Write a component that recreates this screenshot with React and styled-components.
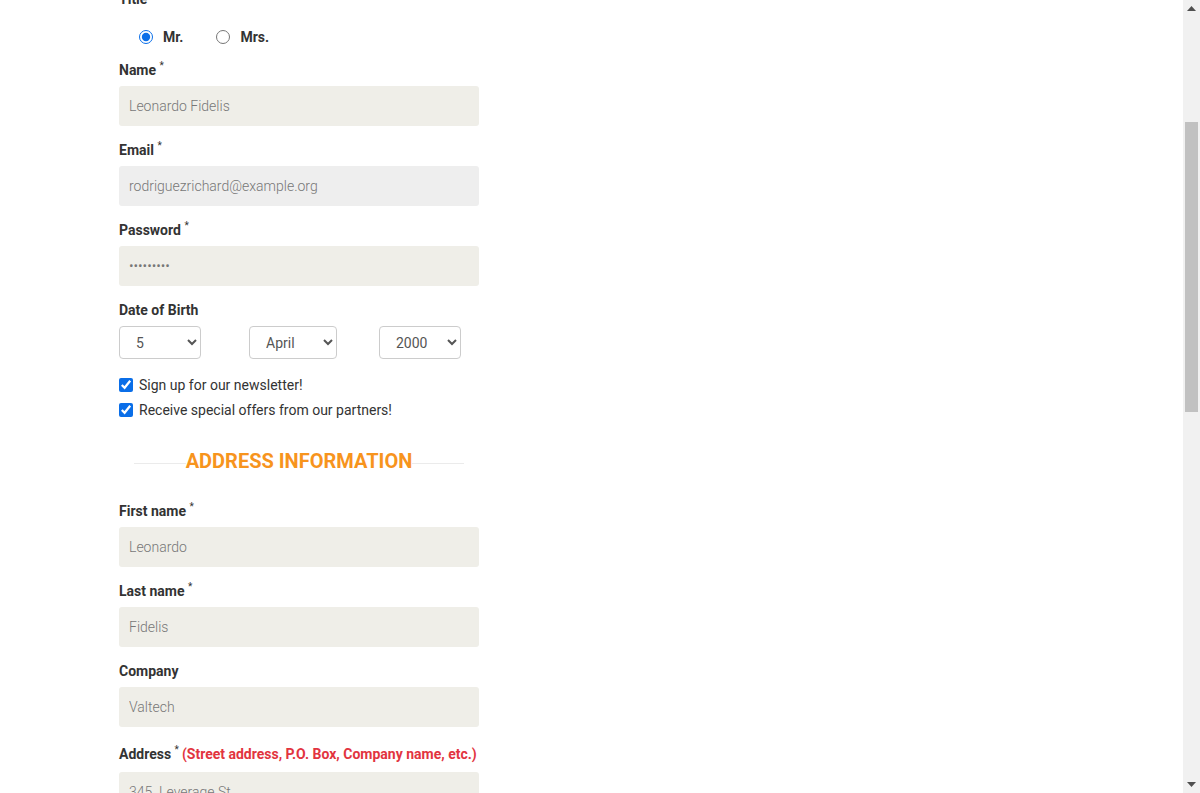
import React from "react";
import styled, { createGlobalStyle } from "styled-components";

const GlobalStyle = createGlobalStyle`
    html, body {
        margin: 0;
        padding: 0;
        background: #fff;
        overflow: hidden;
    }
    * {
        box-sizing: border-box;
    }
`

const App = () => {
    return (
        <Page>
            <GlobalStyle />
            <Main>
                <Form>
                    <Label>Title</Label>
                    <RadioRow>
                        <Option>
                            <input type="radio" name="title" defaultChecked />
                            Mr.
                        </Option>
                        <Option>
                            <input type="radio" name="title" />
                            Mrs.
                        </Option>
                    </RadioRow>

                    <Label>Name <Req>*</Req></Label>
                    <Input defaultValue="Leonardo Fidelis" />

                    <Label>Email <Req>*</Req></Label>
                    <Input grey defaultValue="rodriguezrichard@example.org" readOnly />

                    <Label>Password <Req>*</Req></Label>
                    <Input type="password" defaultValue="123456789" />

                    <Label>Date of Birth</Label>
                    <DateRow>
                        <Select w={82} defaultValue="5">
                            <option value="5">5</option>
                        </Select>
                        <Select w={88} defaultValue="April">
                            <option value="April">April</option>
                        </Select>
                        <Select w={82} defaultValue="2000">
                            <option value="2000">2000</option>
                        </Select>
                    </DateRow>

                    <CheckList>
                        <Check>
                            <input type="checkbox" defaultChecked />
                            Sign up for our newsletter!
                        </Check>
                        <Check>
                            <input type="checkbox" defaultChecked />
                            Receive special offers from our partners!
                        </Check>
                    </CheckList>

                    <Heading>ADDRESS INFORMATION</Heading>

                    <Label>First name <Req>*</Req></Label>
                    <Input defaultValue="Leonardo" />

                    <Label>Last name <Req>*</Req></Label>
                    <Input defaultValue="Fidelis" />

                    <Label>Company</Label>
                    <Input defaultValue="Valtech" />

                    <Label tall>
                        Address <Req>*</Req>
                        <Hint>(Street address, P.O. Box, Company name, etc.)</Hint>
                    </Label>
                    <Input defaultValue="345  Leverage St" />
                </Form>
            </Main>

            <Scrollbar>
                <Arrow>
                    <svg width="9" height="5" viewBox="0 0 9 5"><polygon points="0,5 4.5,0 9,5" fill="#505050" /></svg>
                </Arrow>
                <Track>
                    <Thumb />
                </Track>
                <Arrow>
                    <svg width="9" height="5" viewBox="0 0 9 5"><polygon points="0,0 4.5,5 9,0" fill="#505050" /></svg>
                </Arrow>
            </Scrollbar>
        </Page>
    )
}

const Page = styled.div`
    display: flex;
    width: 1200px;
    height: 793px;
    font-family: Roboto, "Liberation Sans", Arial, sans-serif;
    color: #333;
`

const Main = styled.div`
    flex: 1;
    height: 793px;
    overflow: hidden;
`

const Form = styled.div`
    width: 360px;
    margin: -11px 0 0 119px;
    display: flex;
    flex-direction: column;
`

const Label = styled.div`
    font-size: 14px;
    font-weight: 700;
    line-height: ${p => p.tall ? '26px' : '20px'};
    margin-bottom: ${p => p.tall ? '5px' : '6px'};
    color: #333;
    white-space: nowrap;
`

const Req = styled.sup`
    font-size: 10px;
    font-weight: 400;
    vertical-align: top;
    position: relative;
    top: -4px;
`

const Hint = styled.span`
    color: #e23440;
    margin-left: 3px;
`

const Input = styled.input`
    width: 360px;
    height: 40px;
    border: 0;
    border-radius: 3px;
    outline: 0;
    padding: 0 10px;
    margin-bottom: 14px;
    background-color: ${p => p.grey ? '#eeeeee' : '#efeee8'};
    color: #777;
    font-family: Roboto, "Liberation Sans", Arial, sans-serif;
    font-size: 14px;
    font-weight: 300;
`

const RadioRow = styled.div`
    display: flex;
    align-items: center;
    gap: 33px;
    height: 20px;
    margin: 12px 0 13px;
    padding-left: 20px;
`

const Option = styled.label`
    display: flex;
    align-items: center;
    gap: 10px;
    font-size: 14px;
    font-weight: 700;
    color: #333;
    input {
        width: 14px;
        height: 14px;
        margin: 0;
        accent-color: #0a6ee8;
    }
`

const DateRow = styled.div`
    display: grid;
    grid-template-columns: 130px 130px 130px;
`

const Select = styled.select`
    width: ${p => p.w}px;
    height: 33px;
    border: 1px solid #ccc;
    border-radius: 4px;
    background: #fff;
    padding: 0 8px 0 12px;
    font-family: Roboto, "Liberation Sans", Arial, sans-serif;
    font-size: 14px;
    color: #555;
    outline: 0;
`

const CheckList = styled.div`
    margin-top: 13px;
    display: flex;
    flex-direction: column;
`

const Check = styled.label`
    display: flex;
    align-items: center;
    gap: 6px;
    height: 25px;
    font-size: 14px;
    color: #333;
    input {
        width: 14px;
        height: 14px;
        margin: 0;
        accent-color: #0a6ee8;
    }
`

const Heading = styled.div`
    display: flex;
    align-items: center;
    height: 30px;
    margin: 24px 0 25px;
    padding: 0 15px;
    color: #f7941d;
    font-size: 20px;
    font-weight: 700;
    white-space: nowrap;
    &::before, &::after {
        content: '';
        flex: 1;
        height: 1px;
        margin-top: 4px;
        background-color: #ebebeb;
    }
`

const Scrollbar = styled.div`
    width: 17px;
    height: 793px;
    background-color: #f1f1f1;
    display: flex;
    flex-direction: column;
`

const Arrow = styled.div`
    height: 17px;
    display: flex;
    align-items: center;
    justify-content: center;
`

const Track = styled.div`
    flex: 1;
    display: flex;
    flex-direction: column;
    align-items: center;
`

const Thumb = styled.div`
    width: 13px;
    height: 290px;
    margin-top: 105px;
    background-color: #c1c1c1;
`

export default App;
